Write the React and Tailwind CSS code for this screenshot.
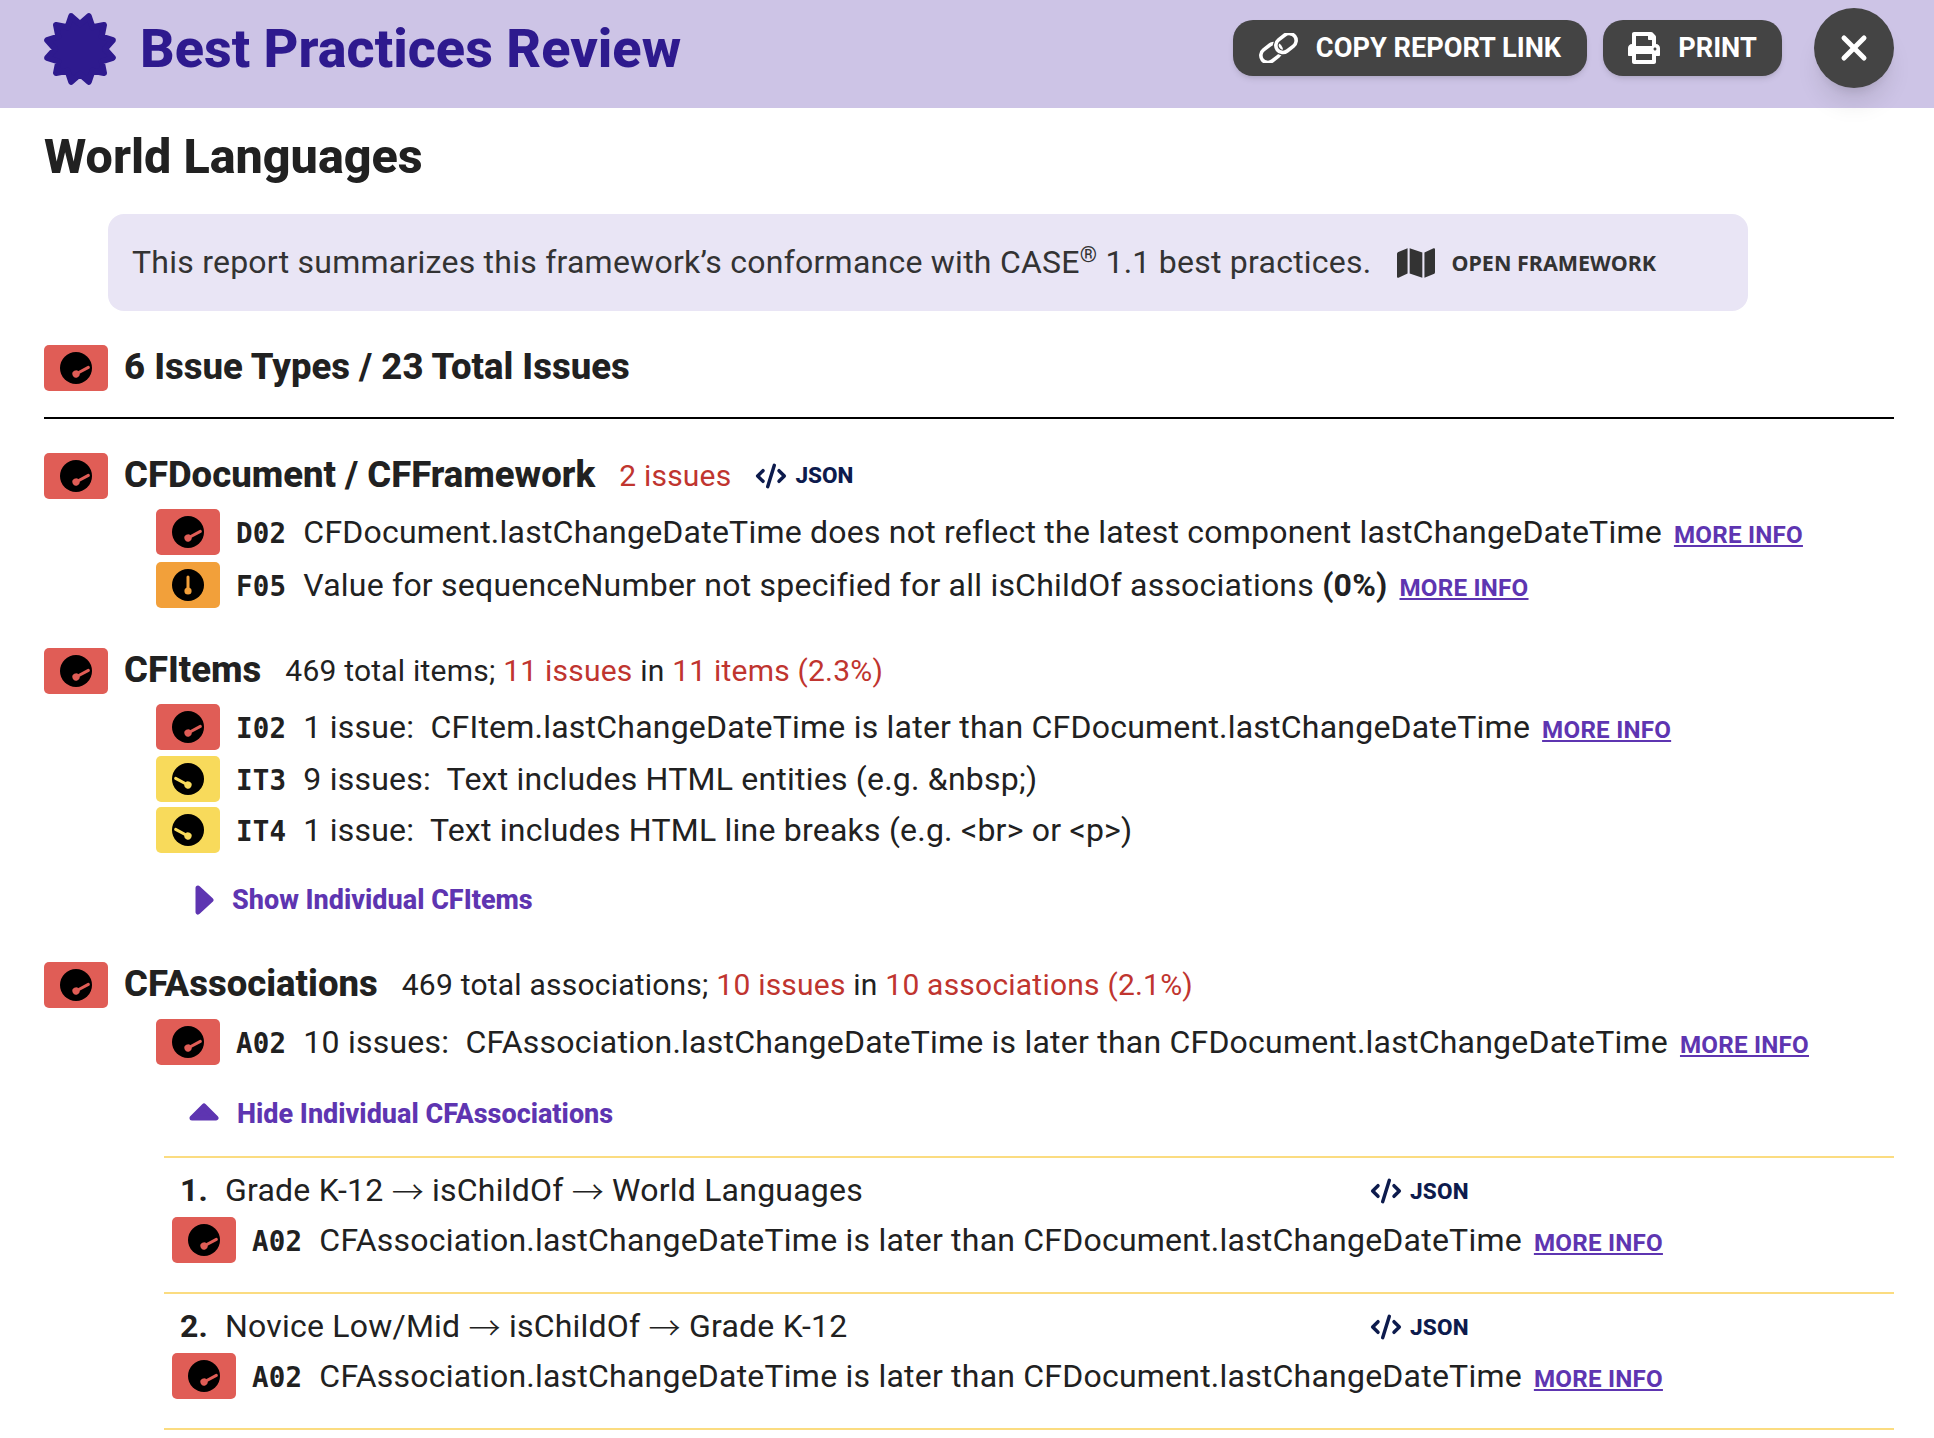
import { CodeXml, X } from 'lucide-react';
import { FaMap, FaPrint } from 'react-icons/fa';

const sans = { fontFamily: 'Roboto, sans-serif' };

const badgeColors = {
  red: { bg: 'bg-[#e05d56]', fill: '#e05d56', angle: 62 },
  orange: { bg: 'bg-[#f2a03a]', fill: '#f2a03a', angle: 0 },
  yellow: { bg: 'bg-[#f8da5b]', fill: '#f8da5b', angle: -62 },
};

function Badge({ level = 'red' }) {
  const c = badgeColors[level];
  return (
    <span className={`flex h-[46px] w-16 shrink-0 items-center justify-center rounded-[5px] ${c.bg}`}>
      <svg width="32" height="32" viewBox="-16 -16 32 32">
        <circle r="16" fill="#000" />
        <g transform={`rotate(${c.angle} 0 6)`}>
          <circle cx="0" cy="6" r="3.6" fill={c.fill} />
          <path d="M0 6V-8" stroke={c.fill} strokeWidth="3" strokeLinecap="round" />
        </g>
      </svg>
    </span>
  );
}

function Star() {
  const pts = [];
  for (let i = 0; i < 24; i++) {
    const a = ((i * 15 + 15) * Math.PI) / 180;
    const r = i % 2 === 0 ? 34 : 25;
    pts.push(`${(37 + r * Math.sin(a)).toFixed(1)},${(37 - r * Math.cos(a)).toFixed(1)}`);
  }
  return (
    <svg width="74" height="74" viewBox="0 0 74 74">
      <polygon points={pts.join(' ')} fill="#2e1a8e" stroke="#2e1a8e" strokeWidth="6" strokeLinejoin="round" />
    </svg>
  );
}

function LinkIcon() {
  return (
    <svg width="39" height="30" viewBox="0 0 39 30" fill="none" strokeWidth="3.6">
      <rect x="1" y="13" width="22" height="14" rx="7" stroke="#fff" transform="rotate(-38 12 20)" />
      <rect x="16" y="3" width="22" height="14" rx="7" stroke="#444" strokeWidth="6" transform="rotate(-38 27 10)" />
      <rect x="16" y="3" width="22" height="14" rx="7" stroke="#fff" transform="rotate(-38 27 10)" />
    </svg>
  );
}

function Code({ children }) {
  return <span className="mr-[17px] font-['DejaVu_Sans_Mono',monospace] text-[27.5px] font-bold text-[#212121]">{children}</span>;
}

function MoreInfo() {
  return <a className="ml-3 text-[24.2px] font-bold text-[#5e35b1] underline">MORE INFO</a>;
}

function Json({ className = '' }) {
  return (
    <span className={`flex items-center gap-2 text-[22.5px] font-extrabold text-[#0d1b4d] ${className}`}>
      <CodeXml size={32} strokeWidth={2.6} />
      JSON
    </span>
  );
}

function Row({ level, code, children, className = '' }) {
  return (
    <div className={`flex h-[46px] items-center text-[32px] tracking-[0.22px] text-[#212121] ${className}`}>
      <Badge level={level} />
      <span className="ml-[16px] flex items-baseline whitespace-pre">
        <Code>{code}</Code>
        {children}
      </span>
    </div>
  );
}

function Heading({ title, children, className = '' }) {
  return (
    <div className={`flex h-[46px] items-center ${className}`}>
      <Badge />
      <h2 className="mb-[2px] ml-4 text-[36.5px] font-extrabold text-[#212121]">{title}</h2>
      {children}
    </div>
  );
}

function Arrow() {
  return <span className="align-[-3px] font-['Noto_Sans_CJK_SC',sans-serif] font-light leading-none">→</span>;
}

function Item({ num, from, to }) {
  return (
    <div className="h-[136px] border-t-2 border-[#fbdc80] pl-2">
      <div className="flex h-[59px] items-center pt-[4px] text-[32px] leading-[40px] tracking-[0.22px] text-[#212121]">
        <b className="ml-[8px] w-[45px]">{num}.</b>
        <span className="w-[1145px] whitespace-pre">
          {from} <Arrow /> isChildOf <Arrow /> {to}
        </span>
        <Json className="mt-[2px]" />
      </div>
      <Row level="red" code="A02">
        CFAssociation.lastChangeDateTime is later than CFDocument.lastChangeDateTime
        <MoreInfo />
      </Row>
    </div>
  );
}

const red = 'text-[#c0352f]';

export default function App() {
  return (
    <div style={sans} className="h-[1438px] overflow-hidden bg-white">
      <header className="flex h-[108px] items-center bg-[#cdc4e6] pb-[10px] pl-[43px] pr-10">
        <Star />
        <h1 className="mb-[2px] ml-[23px] text-[54px] font-extrabold text-[#2e1a8e]">Best Practices Review</h1>
        <div className="mb-[2px] ml-auto flex items-center text-[27.2px] font-bold text-white">
          <button className="flex h-14 w-[354px] items-center justify-center gap-[18px] rounded-[20px] bg-[#444] shadow-md">
            <LinkIcon /> COPY REPORT LINK
          </button>
          <button className="ml-4 flex h-14 w-[179px] items-center justify-center gap-[18px] rounded-[20px] bg-[#444] shadow-md">
            <FaPrint size={32} /> PRINT
          </button>
          <button className="ml-[32px] flex h-20 w-20 items-center justify-center rounded-full bg-[#444] shadow-xl">
            <X size={40} strokeWidth={3} />
          </button>
        </div>
      </header>

      <main className="pl-[44px] pr-10">
        <h1 className="flex h-[106px] items-center pb-[8px] text-[48.5px] font-extrabold text-[#212121]">World Languages</h1>

        <div className="ml-16 flex h-[97px] w-[1640px] items-center rounded-2xl bg-[#e9e5f5] pl-[24px] text-[32px] tracking-[0.24px] text-[#333]">
          <span className="mb-[2px]">
            This report summarizes this framework’s conformance with CASE<sup className="text-[22px]">®</sup> 1.1 best practices.
          </span>
          <FaMap size={38} className="ml-[25px]" />
          <span className="ml-[17px] mt-[2px] font-['Noto_Sans',sans-serif] text-[21.5px] font-bold tracking-normal">OPEN FRAMEWORK</span>
        </div>

        <Heading title="6 Issue Types / 23 Total Issues" className="mt-[34px]" />
        <hr className="mt-[26px] border-t-2 border-black" />

        <Heading title="CFDocument / CFFramework" className="mt-[34px]">
          <span className={`mb-[2px] ml-6 text-[30px] tracking-[0.22px] ${red}`}>2 issues</span>
          <Json className="ml-6" />
        </Heading>
        <div className="ml-[112px] mt-[10px] flex flex-col gap-[7px]">
          <Row level="red" code="D02">
            CFDocument.lastChangeDateTime does not reflect the latest component lastChangeDateTime
            <MoreInfo />
          </Row>
          <Row level="orange" code="F05">
            Value for sequenceNumber not specified for all isChildOf associations <b>(0%)</b>
            <MoreInfo />
          </Row>
        </div>

        <Heading title="CFItems" className="mt-[40px]">
          <span className="mb-[2px] ml-6 text-[30px] tracking-[0.22px] text-[#212121]">
            469 total items; <span className={red}>11 issues</span> in <span className={red}>11 items (2.3%)</span>
          </span>
        </Heading>
        <div className="ml-[112px] mt-[10px] flex flex-col gap-[5.5px]">
          <Row level="red" code="I02">
            1 issue:  CFItem.lastChangeDateTime is later than CFDocument.lastChangeDateTime
            <MoreInfo />
          </Row>
          <Row level="yellow" code="IT3">9 issues:  Text includes HTML entities (e.g. &amp;nbsp;)</Row>
          <Row level="yellow" code="IT4">1 issue:  Text includes HTML line breaks (e.g. &lt;br&gt; or &lt;p&gt;)</Row>
        </div>

        <div className="ml-[151px] mt-[30px] flex h-[34px] items-center text-[27px] font-extrabold text-[#5e35b1]">
          <svg width="19" height="30" viewBox="0 0 19 30">
            <path d="M3 3L16 15L3 27Z" fill="#5e35b1" stroke="#5e35b1" strokeWidth="5" strokeLinejoin="round" />
          </svg>
          <span className="ml-[18px]">Show Individual CFItems</span>
        </div>

        <Heading title="CFAssociations" className="mt-[45px]">
          <span className="mb-[2px] ml-6 text-[30px] tracking-[0.22px] text-[#212121]">
            469 total associations; <span className={red}>10 issues</span> in <span className={red}>10 associations (2.1%)</span>
          </span>
        </Heading>
        <div className="ml-[112px] mt-[11px]">
          <Row level="red" code="A02">
            10 issues:  CFAssociation.lastChangeDateTime is later than CFDocument.lastChangeDateTime
            <MoreInfo />
          </Row>
        </div>

        <div className="ml-[145px] mt-[32px] flex h-[34px] items-center text-[27px] font-extrabold text-[#5e35b1]">
          <svg width="30" height="18" viewBox="0 0 30 18" className="mb-[4px]">
            <path d="M3 15L15 3L27 15Z" fill="#5e35b1" stroke="#5e35b1" strokeWidth="5" strokeLinejoin="round" />
          </svg>
          <span className="ml-[18px]">Hide Individual CFAssociations</span>
        </div>

        <div className="ml-[120px] mt-[25px]">
          <Item num="1" from="Grade K-12" to="World Languages" />
          <Item num="2" from="Novice Low/Mid" to="Grade K-12" />
          <div className="border-t-2 border-[#fbdc80]" />
        </div>
      </main>
    </div>
  );
}
